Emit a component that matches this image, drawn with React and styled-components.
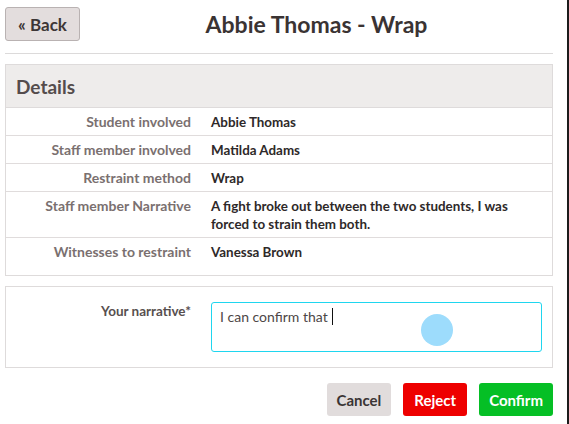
import React from 'react'
import styled, {createGlobalStyle} from 'styled-components'

const GlobalStyle = createGlobalStyle`
    html, body {
        margin: 0;
        padding: 0;
        background: #fff;
    }
    body {
        font-family: Lato, "Open Sans", sans-serif;
        color: #3a3333;
    }
`

const Frame = styled.div`
    width: 569px;
    min-height: 424px;
    box-sizing: border-box;
    padding: 7px 0 0 5px;
    display: flex;
`

const Page = styled.div`
    width: 548px;
    display: flex;
    flex-direction: column;
`

const EdgeLine = styled.div`
    width: 2px;
    margin-left: 14px;
    margin-top: -7px;
    background: #1c1c1c;
`

const TopBar = styled.div`
    display: flex;
    align-items: center;
    height: 34px;
`

const BackButton = styled.button`
    width: 75px;
    height: 34px;
    font-family: inherit;
    font-size: 17px;
    font-weight: 700;
    color: #3d3636;
    background: #e3dddd;
    border: 1px solid #b9b2b2;
    border-radius: 3px;
    padding: 0;
`

const Title = styled.h1`
    flex: 1;
    margin: 0;
    text-align: center;
    font-size: 23px;
    font-weight: 700;
    color: #3a3333;
`

const Divider = styled.div`
    height: 1px;
    background: #dcdada;
    margin: 12px 0 10px;
`

const Panel = styled.div`
    border: 1px solid #dedbdb;
    display: flex;
    flex-direction: column;
    padding-bottom: ${props => props.$bottom || 0}px;
`

const PanelHeader = styled.div`
    height: 42px;
    display: flex;
    align-items: center;
    padding-left: 10px;
    background: #eeeceb;
    border-bottom: 1px solid #dedbdb;
    font-size: 19px;
    font-weight: 700;
    color: #544c4c;
`

const Row = styled.div`
    display: grid;
    grid-template-columns: 185px 1fr;
    column-gap: 20px;
    padding: 5px 0 4px;
    line-height: 18px;
    font-weight: 700;
    border-bottom: ${props => props.$last ? 'none' : '1px solid #e0dcdc'};
`

const Label = styled.div`
    text-align: right;
    font-size: 14px;
    color: #7a7070;
`

const Value = styled.div`
    font-size: 13.4px;
    color: #2e2929;
    padding-right: 20px;
`

const NarrativePanel = styled.div`
    margin-top: 10px;
    border: 1px solid #dedbdb;
    padding: 15px 10px 15px 0;
    display: grid;
    grid-template-columns: 185px 1fr;
    column-gap: 20px;
`

const NarrativeLabel = styled.div`
    text-align: right;
    font-size: 13.5px;
    font-weight: 700;
    color: #574f4f;
    padding-top: 1px;
`

const InputBox = styled.div`
    position: relative;
    height: 50px;
    box-sizing: border-box;
    border: 1px solid #1fd6ef;
    border-radius: 3px;
    padding: 5px 8px;
    font-size: 14px;
    color: #4d4646;
    line-height: 18px;
`

const Caret = styled.span`
    display: inline-block;
    width: 1px;
    height: 17px;
    background: #111;
    vertical-align: -3px;
    margin-left: 4px;
`

const TouchDot = styled.span`
    position: absolute;
    left: 209px;
    top: 11px;
    width: 32px;
    height: 32px;
    border-radius: 50%;
    background: #9ddcfc;
`

const Actions = styled.div`
    display: flex;
    justify-content: flex-end;
    gap: 12px;
    margin-top: 15px;
`

const ActionButton = styled.button`
    height: 33px;
    padding: 0 ${props => props.$pad}px;
    font-family: inherit;
    font-size: 15px;
    font-weight: 700;
    border: none;
    border-radius: 3px;
    background: ${props => props.$bg};
    color: ${props => props.$fg};
`

const details = [
    {label: 'Student involved', value: 'Abbie Thomas'},
    {label: 'Staff member involved', value: 'Matilda Adams'},
    {label: 'Restraint method', value: 'Wrap'},
    {label: 'Staff member Narrative', value: 'A fight broke out between the two students, I was forced to strain them both.'},
    {label: 'Witnesses to restraint', value: 'Vanessa Brown'},
]

const App = () => {
    return (
        <Frame>
            <GlobalStyle/>
            <Page>
                <TopBar>
                    <BackButton>« Back</BackButton>
                    <Title>Abbie Thomas - Wrap</Title>
                </TopBar>
                <Divider/>
                <Panel $bottom={10}>
                    <PanelHeader>Details</PanelHeader>
                    {details.map((item, index) => (
                        <Row key={`detail-${index}`} $last={index === details.length - 1}>
                            <Label>{item.label}</Label>
                            <Value>{item.value}</Value>
                        </Row>
                    ))}
                </Panel>
                <NarrativePanel>
                    <NarrativeLabel>Your narrative*</NarrativeLabel>
                    <InputBox>
                        I can confirm that<Caret/>
                        <TouchDot/>
                    </InputBox>
                </NarrativePanel>
                <Actions>
                    <ActionButton $bg="#e1dcdc" $fg="#3a3434" $pad={10}>Cancel</ActionButton>
                    <ActionButton $bg="#ee0000" $fg="#fff" $pad={11}>Reject</ActionButton>
                    <ActionButton $bg="#05bf25" $fg="#fff" $pad={10}>Confirm</ActionButton>
                </Actions>
            </Page>
            <EdgeLine/>
        </Frame>
    )
}

export default App
